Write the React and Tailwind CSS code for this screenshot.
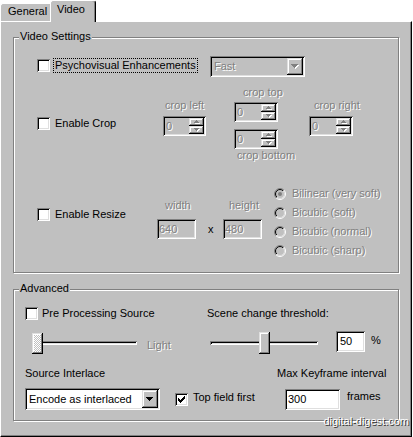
const sunken =
  "shadow-[inset_1px_1px_0_#808080,inset_-1px_-1px_0_#fff,inset_2px_2px_0_#000,inset_-2px_-2px_0_#dfdfdf]";
const raised =
  "shadow-[inset_-1px_-1px_0_#000,inset_1px_1px_0_#dfdfdf,inset_-2px_-2px_0_#808080,inset_2px_2px_0_#fff]";
const dis = "text-[#808080] [text-shadow:1px_1px_0_#fff]";

const CHECK = ["......#", ".....##", "#...###", "##.###.", "#####..", ".###...", "..#...."];

function Check({ checked, className = "" }) {
  return (
    <span className={`w-[13px] h-[13px] shrink-0 bg-white flex items-center justify-center ${sunken} ${className}`}>
      {checked && (
        <svg width="7" height="7" viewBox="0 0 7 7" shapeRendering="crispEdges">
          {CHECK.flatMap((row, y) =>
            [...row].map((c, x) =>
              c === "#" ? <rect key={`${x}-${y}`} x={x} y={y} width="1" height="1" fill="#000" /> : null
            )
          )}
        </svg>
      )}
    </span>
  );
}

function Radio({ on }) {
  return (
    <svg width="12" height="12" viewBox="0 0 12 12" className="shrink-0">
      <defs>
        <linearGradient id="rad-out" x1="0" y1="0" x2="1" y2="1">
          <stop offset="0.5" stopColor="#808080" />
          <stop offset="0.5" stopColor="#fff" />
        </linearGradient>
        <linearGradient id="rad-in" x1="0" y1="0" x2="1" y2="1">
          <stop offset="0.5" stopColor="#000" />
          <stop offset="0.5" stopColor="#dfdfdf" />
        </linearGradient>
      </defs>
      <circle cx="6" cy="6" r="5.5" fill="none" stroke="url(#rad-out)" />
      <circle cx="6" cy="6" r="4.5" fill="#c0c0c0" stroke="url(#rad-in)" />
      {on && <circle cx="6" cy="6" r="2" fill="#808080" />}
    </svg>
  );
}

// little stepped triangles, like the classic arrow glyphs
function Arrow({ dir = "down", big, disabled }) {
  const d = big
    ? "M0 0h7v1h-1v1h-1v1h-1v1h-1v-1h-1v-1h-1v-1h-1z"
    : dir === "up"
    ? "M2 0h1v1h1v1h1v1h-5v-1h1v-1h1z"
    : "M0 0h5v1h-1v1h-1v1h-1v-1h-1v-1h-1z";
  const w = big ? 7 : 5;
  const h = big ? 4 : 3;
  return (
    <svg width={w + 1} height={h + 1} viewBox={`0 0 ${w + 1} ${h + 1}`} shapeRendering="crispEdges">
      {disabled && <path d={d} fill="#fff" transform="translate(1 1)" />}
      <path d={d} fill={disabled ? "#808080" : "#000"} />
    </svg>
  );
}

function Spin({ className = "" }) {
  return (
    <div className={`h-[20px] flex p-[2px] bg-[#c0c0c0] ${sunken} ${className}`}>
      <span className={`flex-1 pl-[1px] leading-[16px] ${dis}`}>0</span>
      <div className="w-[15px] flex flex-col">
        <div className={`h-[8px] flex items-center justify-center ${raised}`}>
          <Arrow dir="up" disabled />
        </div>
        <div className={`h-[8px] flex items-center justify-center ${raised}`}>
          <Arrow dir="down" disabled />
        </div>
      </div>
    </div>
  );
}

function Combo({ text, disabled, className = "" }) {
  return (
    <div className={`flex items-stretch p-[2px] ${sunken} ${disabled ? "bg-[#c0c0c0]" : "bg-white"} ${className}`}>
      <span className={`flex-1 self-center pl-[2px] ${disabled ? dis : ""}`}>{text}</span>
      <div className={`w-[16px] flex items-center justify-center bg-[#c0c0c0] ${raised}`}>
        <Arrow big disabled={disabled} />
      </div>
    </div>
  );
}

function Edit({ text, disabled, className = "" }) {
  return (
    <div className={`flex items-center p-[2px] ${sunken} ${disabled ? "bg-[#c0c0c0] " + dis : "bg-white"} ${className}`}>
      {text}
    </div>
  );
}

function Group({ title, className = "", children }) {
  return (
    <div className={`relative w-[386px] border border-[#808080] shadow-[inset_1px_1px_0_#fff,1px_1px_0_#fff] ${className}`}>
      <span className="absolute left-[5px] top-[-8px] bg-[#c0c0c0] px-[1px]">{title}</span>
      {children}
    </div>
  );
}

const filters = ["Bilinear (very soft)", "Bicubic (soft)", "Bicubic (normal)", "Bicubic (sharp)"];

export default function App() {
  return (
    <div className="relative w-[413px] h-[437px] overflow-hidden bg-white text-black text-[11px] leading-[13px] font-['Liberation_Sans',Arial,sans-serif]">
      {/* tabs */}
      <div className="flex items-end h-[21px]">
        <div className="w-[50px] h-[18px] bg-[#c0c0c0] border-t border-l border-white rounded-tl-[3px] pt-[1px] pl-[7px]">
          General
        </div>
        <div className="relative z-10 -mb-px w-[46px] h-[22px] bg-[#c0c0c0] border-t border-l border-r border-t-white border-l-white border-r-black rounded-t-[3px] shadow-[inset_-1px_0_0_#808080] pt-[2px] pl-[6px]">
          Video
        </div>
      </div>

      {/* page */}
      <div className="w-[412px] h-[416px] bg-[#c0c0c0] border border-t-white border-l-white border-r-black border-b-black shadow-[inset_-1px_-1px_0_#808080] pt-[15px] pl-[12px]">
        <Group title="Video Settings" className="h-[236px]">
          <div className="flex flex-col">
            <div className="mt-[18px] pl-[23px] h-[21px] flex items-start">
              <div className="w-[173px] flex items-start">
                <Check className="mt-[3px]" />
                <span className="ml-[3px] mt-[2px] border border-dotted border-black px-[1px]">
                  Psychovisual Enhancements
                </span>
              </div>
              <Combo text="Fast" disabled className="w-[95px] h-[21px]" />
            </div>

            <div className="mt-[9px] pl-[23px] flex items-start">
              <div className="w-[126px] mt-[31px] h-[13px] flex items-center">
                <Check />
                <span className="ml-[5px]">Enable Crop</span>
              </div>
              <div className="w-[71px] flex flex-col items-start">
                <span className={`mt-[13px] ml-[2px] ${dis}`}>crop left</span>
                <Spin className="mt-[4px] w-[43px]" />
              </div>
              <div className="w-[75px] flex flex-col items-start">
                <span className={`ml-[9px] ${dis}`}>crop top</span>
                <Spin className="mt-[3px] w-[44px]" />
                <Spin className="mt-[7px] w-[44px]" />
                <span className={`ml-[3px] ${dis}`}>crop bottom</span>
              </div>
              <div className="flex flex-col items-start">
                <span className={`mt-[13px] ml-[5px] ${dis}`}>crop right</span>
                <Spin className="mt-[4px] w-[44px]" />
              </div>
            </div>

            <div className="mt-[22px] pl-[23px] flex items-start">
              <div className="w-[120px] mt-[24px] h-[13px] flex items-center">
                <Check />
                <span className="ml-[5px]">Enable Resize</span>
              </div>
              <div className="w-[39px] flex flex-col items-start">
                <span className={`mt-[15px] ml-[8px] ${dis}`}>width</span>
                <Edit text="640" disabled className="mt-[7px] w-[39px] h-[20px] !pl-[2px]" />
              </div>
              <span className="w-[27px] pl-[12px] mt-[39px]">x</span>
              <div className="w-[39px] flex flex-col items-start">
                <span className={`mt-[15px] ml-[6px] ${dis}`}>height</span>
                <Edit text="480" disabled className="mt-[7px] w-[39px] h-[20px]" />
              </div>
              <div className="ml-[12px] flex flex-col">
                {filters.map((f, i) => (
                  <div key={f} className="h-[19px] flex items-center">
                    <Radio on={i === 0} />
                    <span className={`ml-[6px] ${dis}`}>{f}</span>
                  </div>
                ))}
              </div>
            </div>
          </div>
        </Group>

        <Group title="Advanced" className="mt-[16px] h-[132px]">
          <div className="flex flex-col pl-[11px]">
            <div className="mt-[17px] h-[13px] flex items-start">
              <div className="w-[182px] flex items-start">
                <Check />
                <span className="ml-[4px]">Pre Processing Source</span>
              </div>
              <span>Scene change threshold:</span>
            </div>

            <div className="mt-[11px] h-[23px] flex items-center">
              <div className="w-[182px] h-full flex items-center">
                <div className="relative ml-[5px] w-[107px] h-full flex items-center">
                  <div className={`ml-[2px] flex-1 h-[4px] ${sunken}`} />
                  <div
                    className={`absolute left-[2px] top-[2px] w-[11px] h-[21px] bg-[repeating-conic-gradient(#fff_0_25%,#c0c0c0_0_50%)] bg-[length:2px_2px] ${raised}`}
                  />
                </div>
                <span className={`self-start mt-[8px] ml-[10px] ${dis}`}>Light</span>
              </div>
              <div className="relative w-[114px] h-full flex items-center">
                <div className={`mx-[3px] flex-1 h-[4px] ${sunken}`} />
                <div className={`absolute left-[52px] top-[1px] w-[11px] h-[22px] bg-[#c0c0c0] ${raised}`} />
              </div>
              <Edit text="50" className="self-start ml-[15px] w-[29px] h-[21px] !pl-[4px]" />
              <span className="self-start mt-[3px] ml-[6px]">%</span>
            </div>

            <div className="mt-[13px] h-[13px] flex">
              <span className="w-[252px]">Source Interlace</span>
              <span>Max Keyframe interval</span>
            </div>

            <div className="mt-[8px] h-[22px] flex items-start">
              <Combo text="Encode as interlaced" className="w-[135px] h-[22px]" />
              <div className="w-[110px] ml-[15px] flex items-start">
                <Check checked className="mt-[5px]" />
                <span className="ml-[5px] mt-[3px]">Top field first</span>
              </div>
              <Edit text="300" className="mt-[1px] w-[55px] h-[21px] !pl-[3px]" />
              <span className="ml-[7px] mt-[2px]">frames</span>
            </div>
          </div>
        </Group>
      </div>

      <span className="absolute right-[4px] bottom-[9px] text-white [text-shadow:1px_1px_0_#303030]">
        digital-digest.com
      </span>
    </div>
  );
}
